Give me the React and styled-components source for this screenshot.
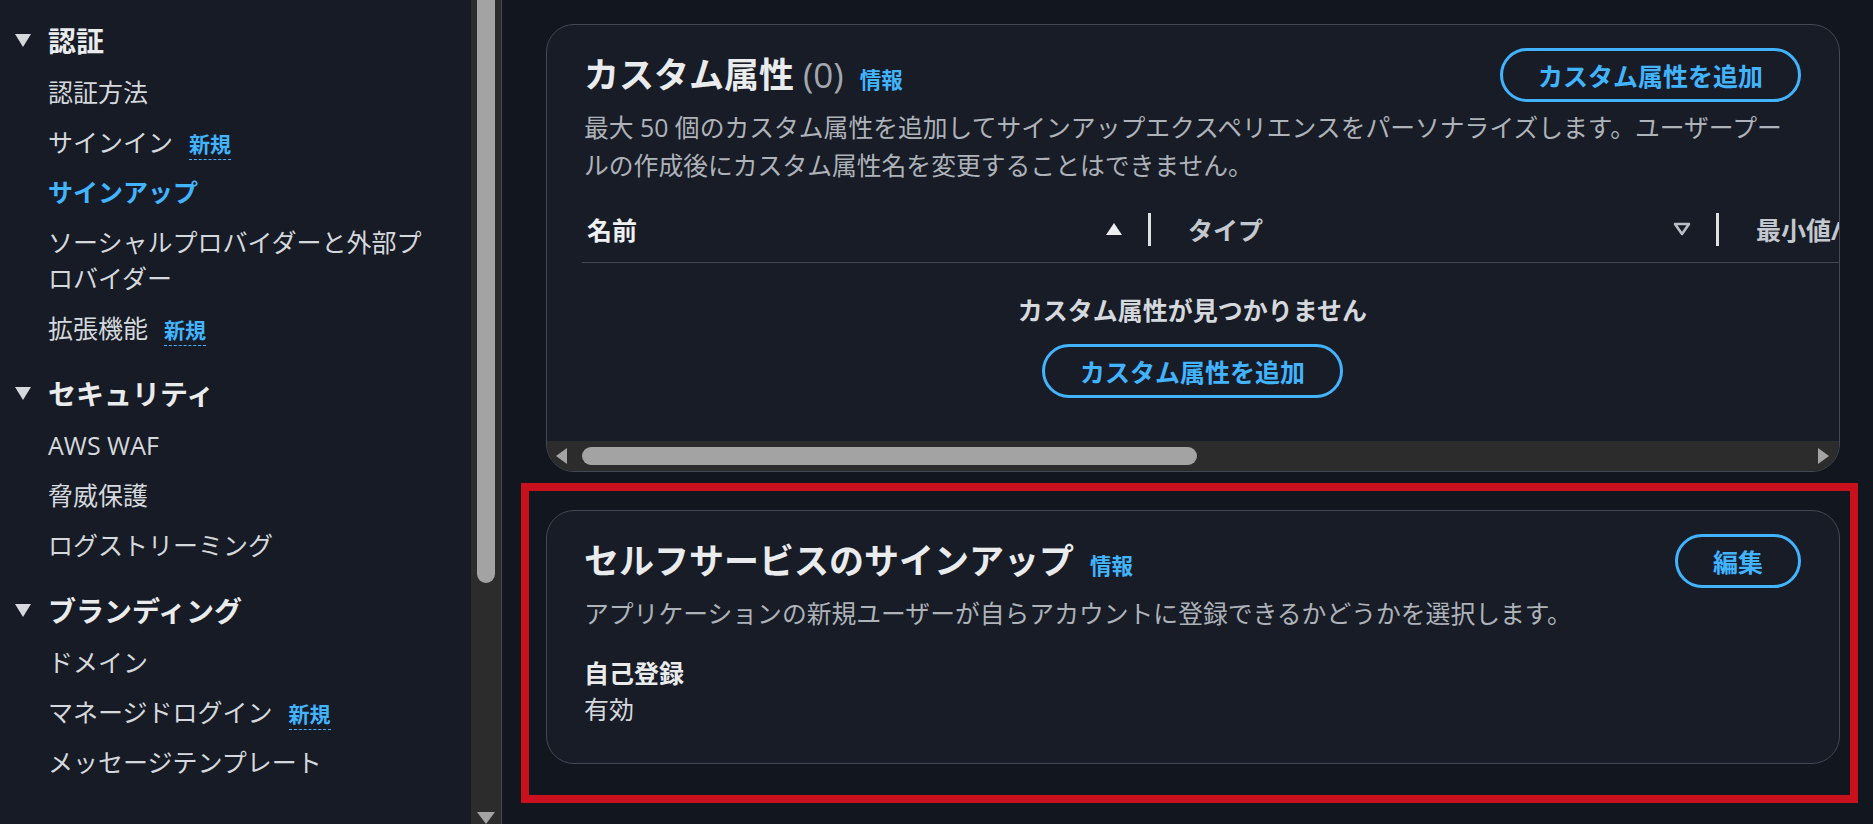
import styled, { createGlobalStyle } from "styled-components"

const GlobalStyle = createGlobalStyle`
  html, body {
    margin: 0;
    padding: 0;
    background: #12161e;
  }
  body {
    font-family: "Open Sans", "Noto Sans CJK JP", sans-serif;
    overflow: hidden;
  }
  * {
    box-sizing: border-box;
  }
`

const navSections = [
    {
        title: "認証",
        items: [
            { label: "認証方法" },
            { label: "サインイン", isNew: true },
            { label: "サインアップ", active: true },
            { label: "ソーシャルプロバイダーと外部プロバイダー" },
            { label: "拡張機能", isNew: true },
        ],
    },
    {
        title: "セキュリティ",
        items: [{ label: "AWS WAF" }, { label: "脅威保護" }, { label: "ログストリーミング" }],
    },
    {
        title: "ブランディング",
        items: [
            { label: "ドメイン" },
            { label: "マネージドログイン", isNew: true },
            { label: "メッセージテンプレート" },
        ],
    },
]

function Caret() {
    return (
        <svg width="18" height="16" viewBox="0 0 18 16">
            <polygon points="1,2 17,2 9,15" fill="#d5d8dd" />
        </svg>
    )
}

function SortAsc() {
    return (
        <svg width="18" height="14" viewBox="0 0 18 14">
            <polygon points="9,1 17,13 1,13" fill="#eceef0" />
        </svg>
    )
}

function SortNone() {
    return (
        <svg width="18" height="14" viewBox="0 0 18 14">
            <polygon points="2,2 16,2 9,12" fill="none" stroke="#b9bdc4" strokeWidth="2.6" strokeLinejoin="round" />
        </svg>
    )
}

function ArrowLeft() {
    return (
        <svg width="13" height="16" viewBox="0 0 13 16">
            <polygon points="12,0 12,16 1,8" fill="#a3a3a3" />
        </svg>
    )
}

function ArrowRight() {
    return (
        <svg width="13" height="16" viewBox="0 0 13 16">
            <polygon points="1,0 1,16 12,8" fill="#a3a3a3" />
        </svg>
    )
}

function Sidebar() {
    return (
        <SideWrap>
            <SideNav>
                {navSections.map((section) => (
                    <Section key={section.title}>
                        <SectionTitle>
                            <Caret />
                            <span>{section.title}</span>
                        </SectionTitle>
                        {section.items.map((item) => (
                            <NavItem key={item.label} active={item.active}>
                                {item.label}
                                {item.isNew && <NewBadge>新規</NewBadge>}
                            </NavItem>
                        ))}
                    </Section>
                ))}
            </SideNav>
            <VScroll>
                <VThumb />
                <VArrow>
                    <svg width="18" height="12" viewBox="0 0 18 12">
                        <polygon points="0,0 18,0 9,12" fill="#a3a3a3" />
                    </svg>
                </VArrow>
            </VScroll>
        </SideWrap>
    )
}

function CustomAttributes() {
    return (
        <Card>
            <CardBody>
                <HeaderRow>
                    <Title>
                        <h2>カスタム属性</h2>
                        <Counter>(0)</Counter>
                        <InfoLink>情報</InfoLink>
                    </Title>
                    <OutlineButton>カスタム属性を追加</OutlineButton>
                </HeaderRow>
                <Description>
                    最大 50 個のカスタム属性を追加してサインアップエクスペリエンスをパーソナライズします。ユーザープールの作成後にカスタム属性名を変更することはできません。
                </Description>
                <TableClip>
                    <TableHead>
                        <HeadCell first>
                            <HeadLabel bright>名前</HeadLabel>
                            <SortAsc />
                            <Resizer />
                        </HeadCell>
                        <HeadCell>
                            <HeadLabel>タイプ</HeadLabel>
                            <SortNone />
                            <Resizer />
                        </HeadCell>
                        <HeadCell>
                            <HeadLabel>最小値/最大値の長さ</HeadLabel>
                            <SortNone />
                            <Resizer />
                        </HeadCell>
                    </TableHead>
                </TableClip>
                <EmptyState>
                    <EmptyText>カスタム属性が見つかりません</EmptyText>
                    <OutlineButton>カスタム属性を追加</OutlineButton>
                </EmptyState>
            </CardBody>
            <HScroll>
                <ArrowLeft />
                <HThumb width={615} />
                <HSpacer />
                <ArrowRight />
            </HScroll>
        </Card>
    )
}

function SelfSignUp() {
    return (
        <Highlighted>
            <Card>
                <CardBody bottom={36}>
                    <HeaderRow>
                        <Title>
                            <h2>セルフサービスのサインアップ</h2>
                            <InfoLink>情報</InfoLink>
                        </Title>
                        <OutlineButton>編集</OutlineButton>
                    </HeaderRow>
                    <Description>
                        アプリケーションの新規ユーザーが自らアカウントに登録できるかどうかを選択します。
                    </Description>
                    <Field>
                        <FieldLabel>自己登録</FieldLabel>
                        <FieldValue>有効</FieldValue>
                    </Field>
                </CardBody>
            </Card>
            <RedFrame />
        </Highlighted>
    )
}

export default function App() {
    return (
        <>
            <GlobalStyle />
            <Page>
                <Sidebar />
                <Main>
                    <CustomAttributes />
                    <SelfSignUp />
                </Main>
            </Page>
        </>
    )
}

const Page = styled.div`
display: flex;
height: 100vh;
overflow: hidden;
`
const SideWrap = styled.aside`
display: flex;
flex-shrink: 0;
width: 502px;
height: 100%;
background: #161b25;
`
const SideNav = styled.nav`
width: 471px;
padding: 20px 30px 0 14px;
display: flex;
flex-direction: column;
gap: 27px;
overflow: hidden;
`
const Section = styled.div`
display: flex;
flex-direction: column;
gap: 14px;
`
const SectionTitle = styled.div`
display: flex;
align-items: center;
gap: 16px;
height: 40px;
font-size: 28px;
font-weight: 700;
color: #e9ebed;
`
const NavItem = styled.div`
padding-left: 34px;
font-size: 25px;
line-height: 36px;
font-weight: ${(p) => (p.active ? 700 : 400)};
color: ${(p) => (p.active ? "#42b4ff" : "#d5d8dd")};
`
const NewBadge = styled.span`
margin-left: 16px;
font-size: 21px;
line-height: 1;
font-weight: 700;
color: #42b4ff;
border-bottom: 1.5px dashed #42b4ff;
padding-bottom: 1px;
`
const VScroll = styled.div`
width: 31px;
flex-shrink: 0;
background: #2c2c2c;
border-right: 1px solid #464a52;
display: flex;
flex-direction: column;
align-items: center;
justify-content: space-between;
padding-right: 1px;
`
const VThumb = styled.div`
width: 18px;
height: 583px;
background: #a3a3a3;
border-radius: 0 0 9px 9px;
`
const VArrow = styled.div`
display: flex;
height: 12px;
`
const Main = styled.main`
flex: 1;
padding: 24px 33px 0 44px;
display: flex;
flex-direction: column;
gap: 38px;
min-width: 0;
`
const Card = styled.section`
background: #171c26;
border: 1px solid #434852;
border-radius: 28px;
overflow: hidden;
`
const CardBody = styled.div`
padding: 23px 38px ${(p) => p.bottom ?? 43}px 37px;
`
const HeaderRow = styled.div`
display: flex;
align-items: center;
justify-content: space-between;
height: 54px;
`
const Title = styled.div`
display: flex;
align-items: baseline;
h2 {
    margin: 0;
    font-size: 35px;
    line-height: 52px;
    font-weight: 700;
    color: #e9ebed;
}
`
const Counter = styled.span`
margin-left: 9px;
font-size: 35px;
color: #a3a7ae;
`
const InfoLink = styled.a`
margin-left: 16px;
font-size: 21.5px;
font-weight: 700;
color: #42b4ff;
`
const OutlineButton = styled.button`
flex-shrink: 0;
height: 54px;
padding: 0 35px;
background: transparent;
border: 3px solid #42b4ff;
border-radius: 27px;
font-family: "Open Sans", "Noto Sans CJK JP", sans-serif;
font-size: 25px;
font-weight: 700;
color: #42b4ff;
`
const Description = styled.p`
margin: 6px 0 0;
font-size: 24.8px;
line-height: 38px;
color: #aeb2b9;
`
const TableClip = styled.div`
margin: 12px -38px 0 -2px;
overflow: hidden;
`
const TableHead = styled.div`
display: flex;
height: 67px;
border-bottom: 1px solid #434852;
`
const HeadCell = styled.div`
flex-shrink: 0;
width: ${(p) => (p.first ? 569 : 568)}px;
display: flex;
align-items: center;
gap: 25px;
padding-left: ${(p) => (p.first ? 5 : 37)}px;
`
const HeadLabel = styled.span`
flex: 1;
font-size: 25px;
font-weight: 700;
white-space: nowrap;
color: ${(p) => (p.bright ? "#eef0f2" : "#c3c7ce")};
`
const Resizer = styled.span`
width: 3px;
height: 33px;
background: #dfe1e5;
`
const EmptyState = styled.div`
padding-top: 29px;
display: flex;
flex-direction: column;
align-items: center;
gap: 16px;
`
const EmptyText = styled.div`
font-size: 25px;
line-height: 36px;
font-weight: 700;
color: #d5d8dd;
`
const HScroll = styled.div`
height: 30px;
background: #2c2c2c;
display: flex;
align-items: center;
padding: 0 9px 0 8px;
gap: 14px;
`
const HThumb = styled.div`
width: ${(p) => p.width}px;
height: 18px;
border-radius: 9px;
background: #a3a3a3;
`
const HSpacer = styled.div`
flex: 1;
`
const Field = styled.div`
margin-top: 23px;
display: flex;
flex-direction: column;
`
const FieldLabel = styled.div`
font-size: 25px;
line-height: 36px;
font-weight: 700;
color: #e9ebed;
`
const FieldValue = styled.div`
font-size: 25px;
line-height: 36px;
color: #d5d8dd;
`
const Highlighted = styled.div`
position: relative;
`
const RedFrame = styled.div`
position: absolute;
top: -27px;
left: -25px;
right: -18px;
bottom: -39px;
border: 8px solid #c8111d;
pointer-events: none;
`
